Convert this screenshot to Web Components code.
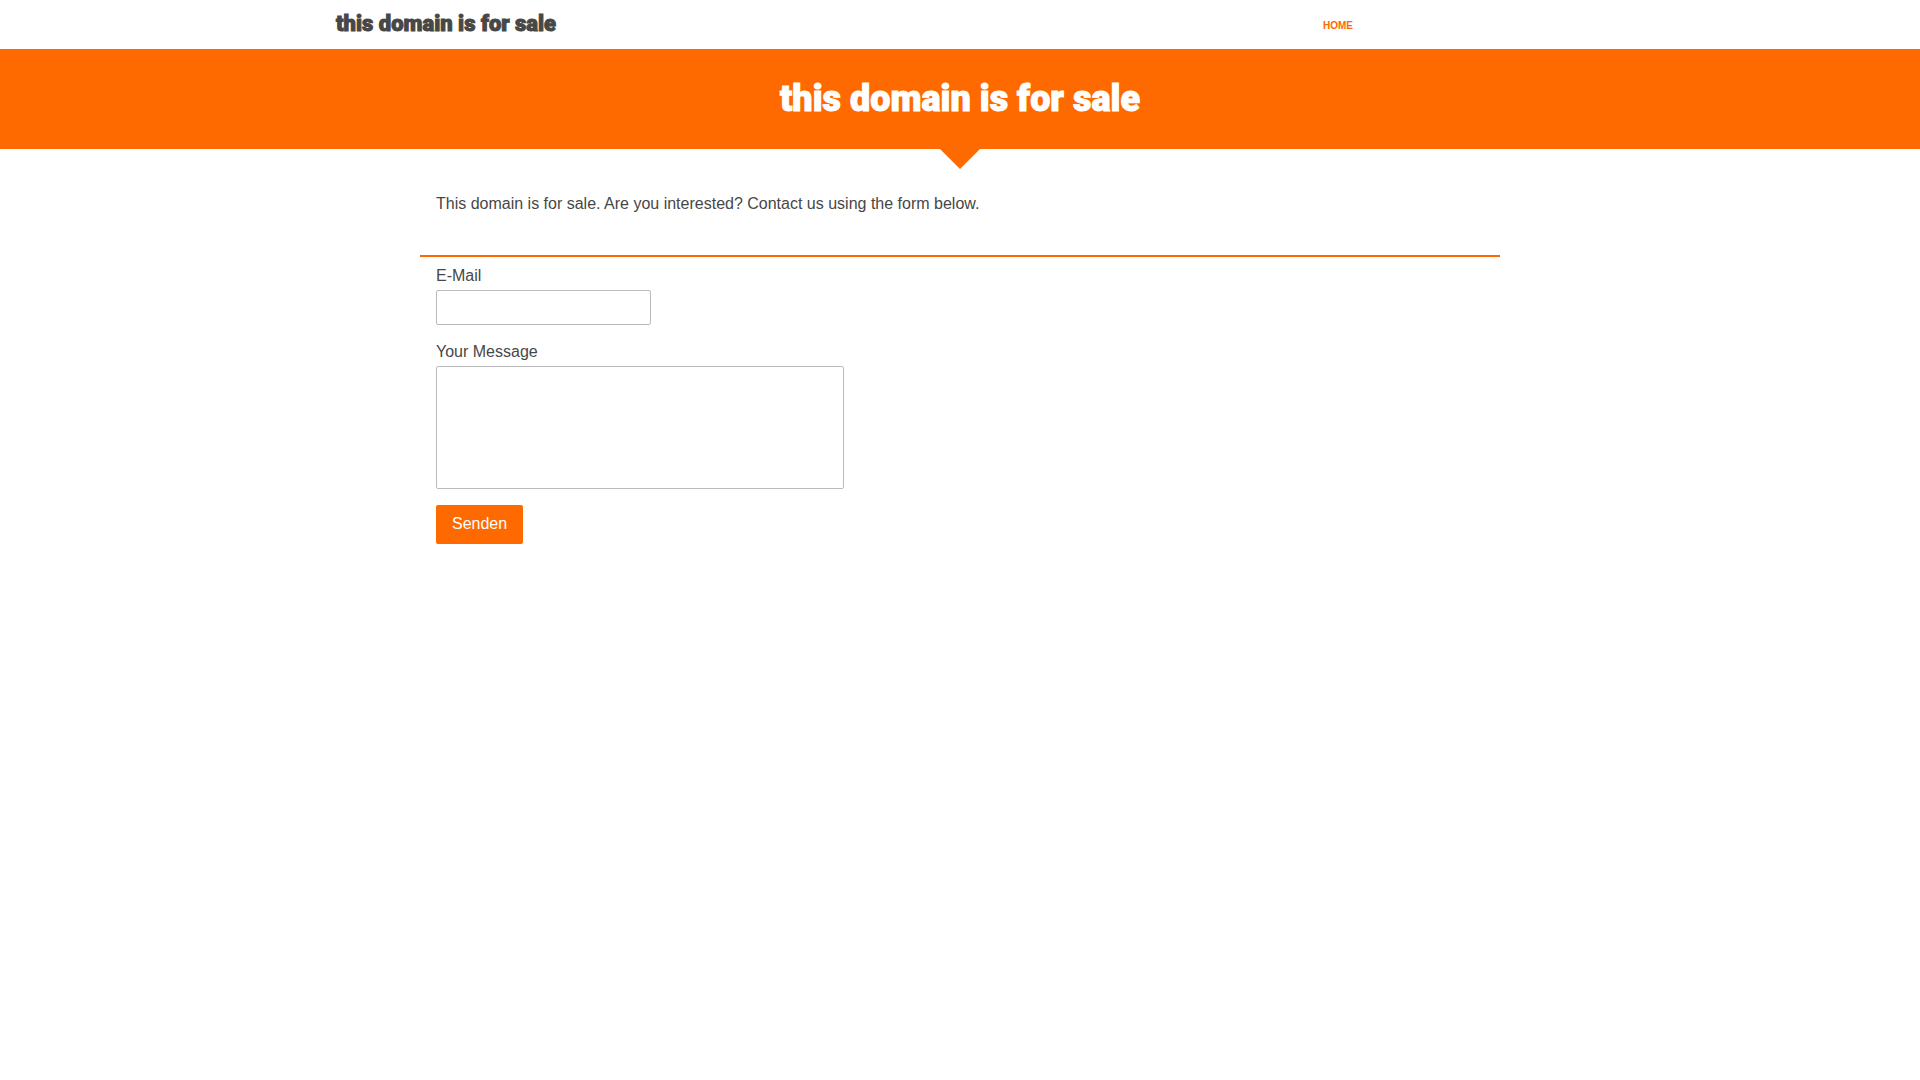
<!DOCTYPE html>
<html lang="en">
<head>
<meta charset="utf-8">
<meta name="viewport" content="width=device-width, initial-scale=1">
<title>this domain is for sale</title>
<style>
:root { --accent: #ff6a00; --ink: #474747; --line: #bbb; --display: Roboto, "Open Sans", sans-serif; }
body { margin: 0; background: #fff; color: var(--ink); font: 16px/24px "Liberation Sans", Arial, sans-serif; }
</style>
</head>
<body>
<site-header heading="this domain is for sale"><nav-link href="#home">Home</nav-link></site-header>
<main>
<page-hero>this domain is for sale</page-hero>
<page-section>
<p>This domain is for sale. Are you interested? Contact us using the form below.</p>
</page-section>
<contact-form></contact-form>
</main>
<script>
function define(name, markup, setup) {
  const template = document.createElement('template');
  template.innerHTML = markup;
  customElements.define(name, class extends HTMLElement {
    constructor() {
      super();
      this.attachShadow({ mode: 'open' }).append(template.content.cloneNode(true));
    }
    connectedCallback() {
      if (setup) setup(this, this.shadowRoot);
    }
  });
}

define('site-header', `
<style>
:host { display: block; }
header { box-sizing: border-box; width: 65%; height: 49px; margin: 0 auto; display: grid; grid-template-columns: 987fr 261fr; align-items: center; }
.brand { font: 900 22px/24px var(--display); -webkit-text-stroke: 1px currentColor; color: var(--ink); text-decoration: none; white-space: nowrap; }
</style>
<header><div><a class="brand" href="#home"></a></div><nav><slot></slot></nav></header>`,
(host, root) => { root.querySelector('.brand').textContent = host.getAttribute('heading'); });

define('nav-link', `
<style>
:host { display: block; line-height: 16px; }
a { display: block; padding-top: 2px; font: bold 10px/16px "Liberation Sans", Arial, sans-serif; color: var(--accent); text-decoration: none; text-transform: uppercase; }
</style>
<a><slot></slot></a>`,
(host, root) => { root.querySelector('a').href = host.getAttribute('href'); });

define('page-hero', `
<style>
:host { display: block; text-align: center; }
div { padding: 26px 16px; background: var(--accent); }
h1 { margin: 0; font: 900 36px/48px var(--display); -webkit-text-stroke: 1px currentColor; color: #fff; }
svg { display: block; margin: 0 auto; fill: var(--accent); }
</style>
<div><h1><slot></slot></h1></div>
<svg width="40" height="20" viewBox="0 0 40 20" aria-hidden="true"><path d="M0 0H40L20 20Z"/></svg>`);

define('page-section', `
<style>
:host { display: block; box-sizing: border-box; max-width: 1080px; margin: 0 auto; padding: 23px 16px; border-bottom: 2px solid var(--accent); }
::slotted(p) { margin: 0 0 16px; }
</style>
<slot></slot>`);

define('contact-form', `
<style>
:host { display: block; box-sizing: border-box; max-width: 1080px; margin: 0 auto; padding: 7px 16px; }
form, .field { display: flex; flex-direction: column; align-items: flex-start; }
.field { gap: 2px; }
.field + .field { margin: 15px 0 16px; }
input, textarea { box-sizing: border-box; max-width: 100%; margin: 0; padding: 8px; border: 1px solid var(--line); border-radius: 2px; background: #fff; font: inherit; color: inherit; }
input { width: 215px; height: 35px; }
textarea { width: 408px; height: 123px; resize: none; }
button { margin: 0; padding: 7px 16px 8px; border: 0; border-radius: 2px; background: var(--accent); color: #fff; font: inherit; cursor: pointer; }
</style>
<form>
<div class="field"><label for="email">E-Mail</label><input id="email" type="email" name="email"></div>
<div class="field"><label for="message">Your Message</label><textarea id="message" name="message"></textarea></div>
<button type="submit">Senden</button>
</form>`);
</script>
</body>
</html>
